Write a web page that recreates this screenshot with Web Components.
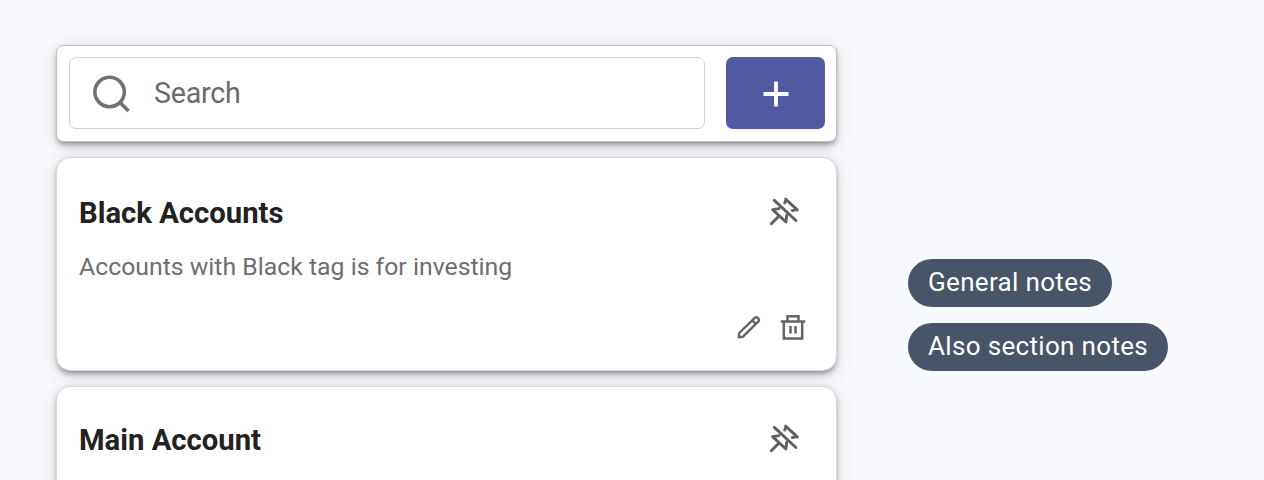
<!DOCTYPE html>
<html lang="en">
<head>
<meta charset="utf-8">
<title>Sections</title>
<style>
body{margin:0;background:#f8f9fd;font-family:Roboto,sans-serif;height:480px;overflow:hidden}
</style>
</head>
<body>
<notes-page>
  <search-bar placeholder="Search"></search-bar>
  <section-card><span slot="title">Black Accounts</span>Accounts with Black tag is for investing</section-card>
  <section-card style="--title-shift:-2.5px"><span slot="title">Main Account</span></section-card>
  <note-chip slot="notes">General notes</note-chip>
  <note-chip slot="notes">Also section notes</note-chip>
</notes-page>
<script>
const define = (name, html) => customElements.define(name, class extends HTMLElement {
  constructor() {
    super();
    this.attachShadow({mode: 'open'}).innerHTML = html;
  }
  connectedCallback() {
    const label = this.shadowRoot.querySelector('.placeholder');
    if (label) label.textContent = this.getAttribute('placeholder');
  }
});

const shadow = 'box-shadow:0 4px 5px -1px rgba(0,0,0,.32),0 4px 10px rgba(0,0,0,.14),0 2px 20px rgba(0,0,0,.13);';

define('notes-page', `<style>
:host{display:flex;height:480px;overflow:hidden;box-sizing:border-box;padding:46px 0 0 57px;gap:71px}
main{display:flex;flex-direction:column;width:780px;flex:none}
aside{display:flex;flex-direction:column;align-items:flex-start;gap:16px;padding-top:213px}
</style><main><slot></slot></main><aside><slot name="notes"></slot></aside>`);

define('search-bar', `<style>
:host{display:flex;height:95px;width:779px;margin-bottom:17px;box-sizing:border-box;padding:11px 11.5px 12px 12px;gap:21px;background:#fff;border-radius:6px;${shadow}outline:1.5px solid #bfbfbf}
.field{flex:1;display:flex;align-items:center;box-sizing:border-box;height:72px;border:1.5px solid #d2d2d2;border-radius:7px;padding-left:22px;color:#6b6b6b}
svg{display:block;flex:none}
.field svg{padding-top:1px}
.placeholder{font-size:28.6px;line-height:34px;margin-left:22px;position:relative;top:-.5px;letter-spacing:-.2px}
button{width:99px;height:72px;border:0;border-radius:7px;background:#5059a1;padding:1px 0 0 1px;display:flex;align-items:center;justify-content:center}
</style>
<div class="field"><svg width="40" height="40" viewBox="0 0 40 40" fill="none" stroke="#737373" stroke-width="3.6"><circle cx="17.6" cy="18" r="14.7"/><path d="M27.5 28 36.5 37"/></svg><span class="placeholder"></span></div>
<button aria-label="Add"><svg width="28" height="28" viewBox="0 0 28 28" stroke="#fff" stroke-width="3.8"><path d="M14 1.5v25M1.5 14h25"/></svg></button>`);

define('icon-unpin', `<style>:host{display:block;width:32px;height:32px}svg{display:block}</style>
<svg width="32" height="32" viewBox="0 0 32 32" fill="none" stroke="#606060" stroke-width="2.9" stroke-linejoin="round" stroke-linecap="round"><path d="M5.3 5.4 26.9 25.5M2.3 28.8 9.5 21.5M9.9 13.6 3.6 14.6 16.9 27 17.7 20.5M16.6 4 28.2 14.9M17 4.4 15.7 8M28 14.7 23.3 15.6"/></svg>`);

define('icon-edit', `<style>:host{display:block}svg{display:block}</style>
<svg width="26" height="26" viewBox="0 0 26 26" fill="none" stroke="#646464" stroke-width="2.4" stroke-linejoin="round"><path d="M2.8 23.2 3.2 19 18.8 3.8Q20.3 2.7 22.1 4.2 23.7 5.9 22.4 7.4L7 22.7ZM16.2 6.3 20 10"/></svg>`);

define('icon-trash', `<style>:host{display:block}svg{display:block}</style>
<svg width="26" height="26" viewBox="0 0 26 26" fill="none" stroke="#646464" stroke-width="2.5"><path d="M.8 7.6H25.2M7.5 7.6V2.3H18.5V7.6M3.8 7.6V24.5H22.2V7.6M10.5 12V19.5M15.5 12V19.5"/></svg>`);

define('section-card', `<style>
:host{display:flex;flex-direction:column;flex:none;box-sizing:border-box;width:779px;height:211.5px;margin-bottom:17.5px;background:#fff;border-radius:13px;padding:34px 30px 30px 22px;${shadow}outline:1px solid #d8d8d8}
header{display:flex;justify-content:space-between;align-items:flex-start;padding-right:5.5px;height:42px;margin-top:var(--title-shift,0)}
h2{margin:0;font-size:29.25px;line-height:42px;font-weight:700;color:#222}
icon-unpin{margin-top:3px}
p{margin:17px 0 0;font-size:24.8px;line-height:32px;color:#6e6e6e}
footer{display:flex;justify-content:flex-end;gap:18px;margin-top:auto}
</style><header><h2><slot name="title"></slot></h2><icon-unpin></icon-unpin></header><p><slot></slot></p><footer><icon-edit></icon-edit><icon-trash></icon-trash></footer>`);

define('note-chip', `<style>:host{display:block;height:48px;line-height:47px;padding:0 20px;border-radius:24px;background:#485467;color:#fff;font-size:26px;letter-spacing:.33px;white-space:nowrap}</style><slot></slot>`);
</script>
</body>
</html>
